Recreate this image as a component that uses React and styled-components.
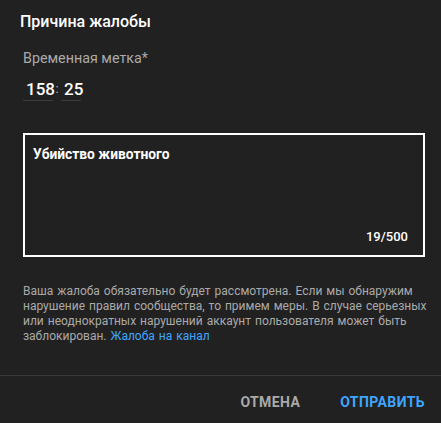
import React from 'react'
import styled, { createGlobalStyle } from 'styled-components'

const GlobalStyle = createGlobalStyle`
  html, body {
    margin: 0;
    padding: 0;
    background: #212121;
  }
  body {
    font-family: Roboto, 'Liberation Sans', Arial, sans-serif;
  }
`

const Dialog = styled.div`
  width: 441px;
  height: 423px;
  background: #212121;
  display: flex;
  flex-direction: column;
  box-sizing: border-box;
`

const Content = styled.div`
  padding: 10px 16px 0 20px;
  flex: 1;
`

const Title = styled.h2`
  margin: 0;
  font-size: 16px;
  line-height: 24px;
  font-weight: 500;
  color: #fff;
`

const Field = styled.div`
  padding-left: 3px;
`

const Label = styled.div`
  margin-top: 14px;
  font-size: 14.3px;
  line-height: 20px;
  color: #aaa;
`

const TimeRow = styled.div`
  margin-top: 9px;
  display: flex;
  align-items: flex-end;
`

const TimeInput = styled.div`
  width: ${({ $w }) => $w}px;
  height: 24px;
  box-sizing: border-box;
  border-bottom: 1px solid #3d3d3d;
  font-size: 17px;
  line-height: 24px;
  font-weight: 500;
  color: #fff;
  padding-left: 3px;
`

const Colon = styled.span`
  width: 8px;
  text-align: center;
  font-size: 13px;
  line-height: 24px;
  color: #aaa;
  align-self: flex-start;
`

const Box = styled.div`
  margin-top: 32px;
  height: 124px;
  box-sizing: border-box;
  border: 2px solid #fff;
  padding: 10px 15px 9px 8px;
  display: flex;
  flex-direction: column;
  justify-content: space-between;
`

const BoxText = styled.div`
  font-size: 13.8px;
  line-height: 18px;
  font-weight: 700;
  color: #fff;
`

const Counter = styled.div`
  align-self: flex-end;
  font-size: 13px;
  line-height: 18px;
  font-weight: 500;
  color: #fff;
`

const Note = styled.p`
  margin: 27px -12px 0 0;
  font-size: 12px;
  word-spacing: 1px;
  line-height: 15px;
  color: #aaa;
`

const Link = styled.a`
  color: #3ea6ff;
  text-decoration: none;
`

const Footer = styled.div`
  border-top: 1px solid #383838;
  height: 48px;
  box-sizing: border-box;
  display: flex;
  justify-content: flex-end;
  align-items: center;
  gap: 40px;
  padding: 4px 16px 0 0;
`

const Button = styled.button`
  background: none;
  border: none;
  padding: 0;
  font-family: Roboto, 'Liberation Sans', Arial, sans-serif;
  font-size: 14px;
  line-height: 20px;
  font-weight: 700;
  letter-spacing: 0.4px;
  text-transform: uppercase;
  color: ${({ $primary }) => ($primary ? '#3ea6ff' : '#aaa')};
  cursor: pointer;
`

export default function App() {
  return (
    <>
      <GlobalStyle />
      <Dialog>
        <Content>
          <Title>Причина жалобы</Title>
          <Field>
            <Label>Временная метка*</Label>
            <TimeRow>
              <TimeInput $w={30}>158</TimeInput>
              <Colon>:</Colon>
              <TimeInput $w={20}>25</TimeInput>
            </TimeRow>
            <Box>
              <BoxText>Убийство животного</BoxText>
              <Counter>19/500</Counter>
            </Box>
            <Note>
              Ваша жалоба обязательно будет рассмотрена. Если мы обнаружим
              <br />
              нарушение правил сообщества, то примем меры. В случае серьезных
              <br />
              или неоднократных нарушений аккаунт пользователя может быть
              <br />
              заблокирован. <Link href="#">Жалоба на канал</Link>
            </Note>
          </Field>
        </Content>
        <Footer>
          <Button>Отмена</Button>
          <Button $primary>Отправить</Button>
        </Footer>
      </Dialog>
    </>
  )
}
